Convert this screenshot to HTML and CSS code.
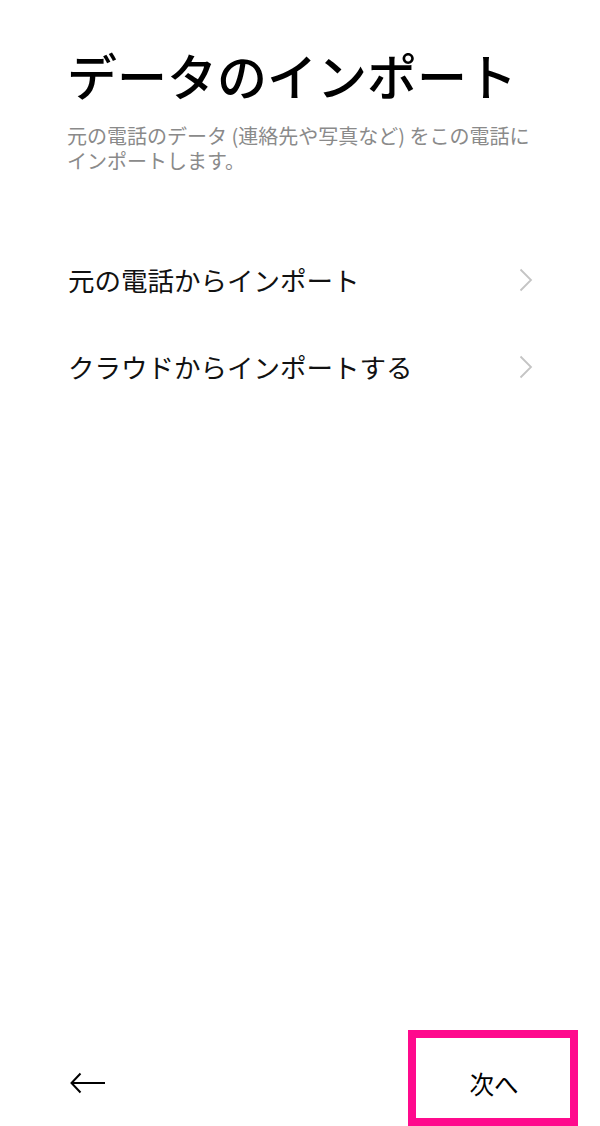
FILE: index.html
```html
<!DOCTYPE html>
<html lang="ja">
<head>
<meta charset="utf-8">
<link rel="stylesheet" href="styles.css">
</head>
<body>
<div class="page">
  <header class="header">
    <h1 class="title">データのインポート</h1>
    <p class="subtitle">元の電話のデータ (連絡先や写真など) をこの電話にインポートします。</p>
  </header>
  <ul class="options">
    <li class="option">
      <span class="option-label">元の電話からインポート</span>
      <svg class="chevron" width="14" height="24" viewBox="0 0 14 24"><path d="M1.5 1.5 L12 12 L1.5 22.5" fill="none" stroke="#c4c4c4" stroke-width="1.8"/></svg>
    </li>
    <li class="option">
      <span class="option-label">クラウドからインポートする</span>
      <svg class="chevron" width="14" height="24" viewBox="0 0 14 24"><path d="M1.5 1.5 L12 12 L1.5 22.5" fill="none" stroke="#c4c4c4" stroke-width="1.8"/></svg>
    </li>
  </ul>
  <footer class="footer">
    <button class="back" aria-label="戻る">
      <svg width="36" height="22" viewBox="0 0 36 22"><path d="M2 11 H35 M10.5 1.5 L1.5 11 L10.5 20.5" fill="none" stroke="#000" stroke-width="2"/></svg>
    </button>
    <button class="next">次へ</button>
  </footer>
</div>
</body>
</html>
```

FILE: styles.css
```css
* { box-sizing: border-box; }
html, body {
  margin: 0;
  padding: 0;
  background: #fff;
}
body {
  font-family: "Noto Sans CJK JP", "Noto Sans", sans-serif;
  color: #000;
}
.page {
  width: 600px;
  height: 1126px;
  display: flex;
  flex-direction: column;
}
.header {
  padding: 44px 60px 0 67px;
}
.title {
  margin: 0;
  font-size: 50px;
  font-weight: 500;
  line-height: 60px;
  letter-spacing: 0;
}
.subtitle {
  margin: 19px 0 0 0;
  font-size: 20px;
  line-height: 25px;
  color: #8a8a8a;
}
.options {
  list-style: none;
  margin: 63px 0 0 0;
  padding: 0 66px 0 68px;
}
.option {
  height: 87px;
  display: flex;
  align-items: center;
  justify-content: space-between;
}
.option-label {
  font-size: 26.5px;
  line-height: 36px;
  color: #111;
}
.chevron {
  display: block;
  margin-right: 1px;
}
.footer {
  margin-top: auto;
  height: 96px;
  display: flex;
  align-items: center;
  justify-content: space-between;
  padding: 0 22px 0 70px;
}
.back {
  border: 0;
  background: none;
  padding: 0;
  display: flex;
  margin-top: 10px;
}
.next {
  width: 170px;
  height: 96px;
  border: 8px solid #ff0a8d;
  background: #fff;
  font-family: "Noto Sans CJK JP", sans-serif;
  font-size: 24.5px;
  color: #000;
  padding: 10px 0 0 2px;
}
```
